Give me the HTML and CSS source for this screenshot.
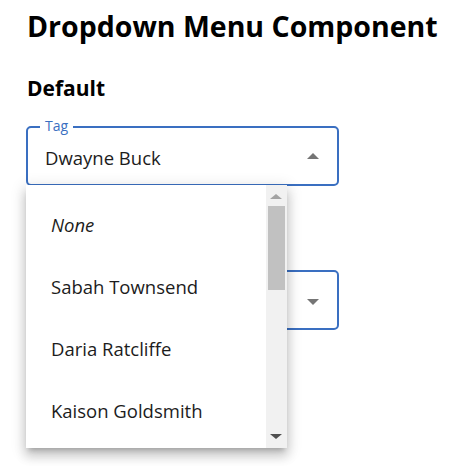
FILE: index.html
```html
<!DOCTYPE html>
<html>
<head>
<meta charset="utf-8">
<link rel="stylesheet" href="styles.css">
</head>
<body>
<main class="page">
  <h1 class="title">Dropdown Menu Component</h1>
  <section class="section">
    <h3 class="section-title">Default</h3>
    <div class="field field-open">
      <span class="field-label">Tag</span>
      <span class="field-value">Dwayne Buck</span>
      <span class="caret caret-up"></span>
      <div class="menu">
        <ul class="menu-list">
          <li class="menu-item menu-item-none">None</li>
          <li class="menu-item">Sabah Townsend</li>
          <li class="menu-item">Daria Ratcliffe</li>
          <li class="menu-item">Kaison Goldsmith</li>
        </ul>
        <div class="scrollbar">
          <span class="sb-arrow sb-up"></span>
          <div class="sb-track"><div class="sb-thumb"></div></div>
          <span class="sb-arrow sb-down"></span>
        </div>
      </div>
    </div>
  </section>
  <section class="section">
    <h3 class="section-title">Disabled</h3>
    <div class="field">
      <span class="field-label">Tag</span>
      <span class="field-value">Sabah Townsend</span>
      <span class="caret caret-down"></span>
    </div>
  </section>
</main>
</body>
</html>
```

FILE: styles.css
```css
* { box-sizing: border-box; }
html, body { margin: 0; padding: 0; background: #fff; height: 100%; }
body {
  font-family: "Open Sans", "Noto Sans", sans-serif;
  color: #000;
}
.page {
  padding: 9px 0 0 26px;
  min-height: 466px;
}
.title {
  margin: 0;
  font-size: 28.5px;
  line-height: 34px;
  font-weight: 700;
  padding-left: 1px;
  white-space: nowrap;
}
.section {
  margin-top: 33px;
}
.section + .section { margin-top: 34px; }
.section-title {
  margin: 0 0 26px 0;
  font-size: 21px;
  line-height: 24px;
  font-weight: 700;
  padding-left: 1px;
}
.field {
  position: relative;
  width: 313px;
  height: 60px;
  border: 2px solid #3a6fc1;
  border-radius: 5px;
  display: flex;
  align-items: center;
  padding: 2px 18px 0 17px;
}
.field-label {
  position: absolute;
  top: -11px;
  left: 12px;
  padding: 0 5px;
  background: #fff;
  color: #3a6fc1;
  font-size: 14px;
  line-height: 18px;
}
.field-value {
  flex: 1;
  font-size: 18.5px;
  color: #1c1c1c;
}
.caret {
  width: 0;
  height: 0;
  border-left: 6px solid transparent;
  border-right: 6px solid transparent;
}
.caret-up { border-bottom: 6px solid #757575; margin-bottom: 2px; }
.caret-down { border-top: 6px solid #757575; margin-top: 2px; }

.menu {
  position: absolute;
  top: calc(100% + 1px);
  left: -2px;
  width: 261px;
  height: 263px;
  background: #fff;
  display: flex;
  overflow: hidden;
  z-index: 10;
  box-shadow: 0 5px 5px -3px rgba(0,0,0,.2), 0 8px 10px 1px rgba(0,0,0,.14), 0 3px 14px 2px rgba(0,0,0,.12);
}
.menu-list {
  list-style: none;
  margin: 0;
  padding: 8px 0 0 0;
  flex: 1;
}
.menu-item {
  height: 62px;
  display: flex;
  align-items: center;
  padding-left: 25px;
  font-size: 18.5px;
  color: #1c1c1c;
}
.menu-item-none { font-style: italic; }
.scrollbar {
  width: 21px;
  background: #f1f1f1;
  display: flex;
  flex-direction: column;
  align-items: center;
}
.sb-arrow {
  width: 0; height: 0;
  border-left: 6px solid transparent;
  border-right: 6px solid transparent;
}
.sb-up { border-bottom: 5px solid #a3a3a3; margin-top: 9px; margin-right: 2px; }
.sb-down { border-top: 5px solid #505050; margin-bottom: 9px; margin-right: 2px; }
.sb-track {
  flex: 1;
  width: 100%;
  padding: 7px 2px 0 2px;
}
.sb-thumb {
  width: 17px;
  height: 84px;
  background: #c1c1c1;
}
```
